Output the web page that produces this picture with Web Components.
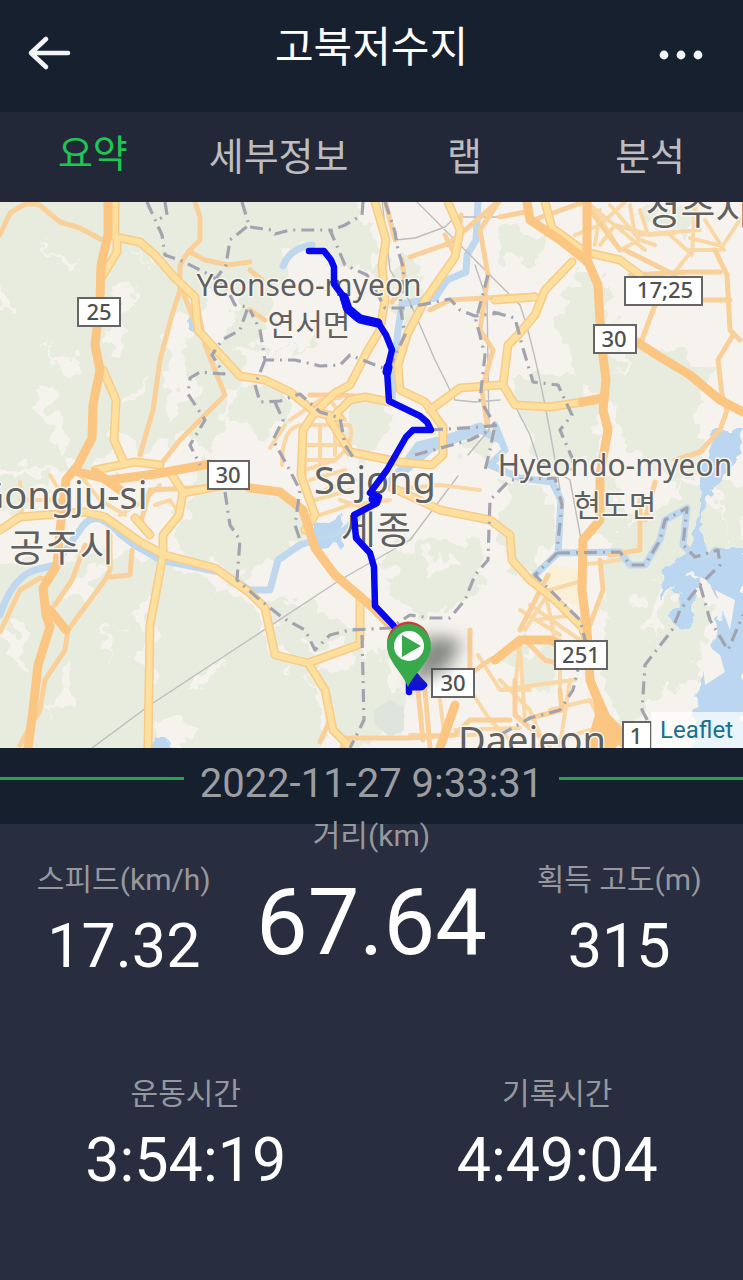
<!DOCTYPE html>
<html lang="ko">
<head>
<meta charset="utf-8">
<meta name="viewport" content="width=device-width, initial-scale=1">
<title>고북저수지</title>
<style>
  html { background: #282e3f; }
  body { margin: 0; font-family: Roboto, "Noto Sans CJK KR", sans-serif; color: #fff; }
</style>
</head>
<body>
<ride-page></ride-page>

<template id="page-tpl">
  <style>
    :host { display: flex; flex-direction: column; min-height: 100vh; background: #282e3f; }
    .row { display: grid; grid-auto-flow: column; grid-auto-columns: 1fr; }
    .main { align-items: start; }
    .main stat-item:not([large]) { margin-top: 44px; }
    .times { margin-top: 100px; }
  </style>
  <page-header>고북저수지</page-header>
  <tab-bar>
    <tab-button selected>요약</tab-button>
    <tab-button>세부정보</tab-button>
    <tab-button>랩</tab-button>
    <tab-button>분석</tab-button>
  </tab-bar>
  <route-map></route-map>
  <date-divider>2022-11-27 9:33:31</date-divider>
  <main>
    <div class="row main">
      <stat-item><span slot="label">스피드(km/h)</span>17.32</stat-item>
      <stat-item large><span slot="label">거리(km)</span>67.64</stat-item>
      <stat-item><span slot="label">획득 고도(m)</span>315</stat-item>
    </div>
    <div class="row times">
      <stat-item><span slot="label">운동시간</span>3:54:19</stat-item>
      <stat-item><span slot="label">기록시간</span>4:49:04</stat-item>
    </div>
  </main>
</template>

<template id="header-tpl">
  <style>
    :host { display: block; background: #17202f; }
    header { display: grid; grid-template-columns: 100px 1fr 100px; height: 112px; box-sizing: border-box; padding-bottom: 8px; align-items: center; }
    h1 { margin: 0 0 8px; font-size: 42px; line-height: 56px; font-weight: 400; text-align: center; }
    button { border: 0; padding: 0; background: none; color: #f4f5f7; display: grid; place-items: center; height: 88px; }
    svg { display: block; }
  </style>
  <header>
    <button type="button" aria-label="뒤로"><svg width="48" height="40" viewBox="0 0 48 40" fill="none" stroke="currentColor" stroke-width="4.6" stroke-linecap="round" stroke-linejoin="round"><path d="M20 7 5 21 20 35M5 21H42"/></svg></button>
    <h1><slot></slot></h1>
    <button type="button" aria-label="더보기"><svg width="72" height="16" viewBox="0 0 72 16" fill="currentColor"><circle cx="7" cy="11" r="4.4"/><circle cx="24" cy="11" r="4.4"/><circle cx="41" cy="11" r="4.4"/></svg></button>
  </header>
</template>

<template id="tabs-tpl">
  <style>
    :host { display: block; background: #222837; }
    nav { display: grid; grid-auto-flow: column; grid-auto-columns: 1fr; height: 90px; }
  </style>
  <nav><slot></slot></nav>
</template>

<template id="tab-tpl">
  <style>
    :host { display: grid; color: #bdbdbf; }
    :host([selected]) { color: #1fc653; }
    button { border: 0; padding: 0; background: none; color: inherit; font: inherit; font-size: 38px; line-height: 52px; }
    :host([selected]) button { padding-bottom: 6px; }
  </style>
  <button type="button"><slot></slot></button>
</template>

<template id="date-tpl">
  <style>
    :host { display: flex; gap: 16px; height: 76px; background: #161f2e; color: #9c9da1; }
    i { flex: 1; height: 3px; margin-top: 29px; background: #2aa052; }
    time { font-size: 40px; line-height: 48px; margin-top: 12px; }
  </style>
  <i></i><time datetime="2022-11-27T09:33:31"><slot></slot></time><i></i>
</template>

<template id="stat-tpl">
  <style>
    :host { display: flex; flex-direction: column; align-items: center; text-align: center; }
    .label { font-size: 30px; line-height: 24px; color: #97989d; white-space: nowrap; }
    .value { font-size: 61px; line-height: 72px; margin-top: 18px; }
    :host([large]) .value { font-size: 92px; line-height: 110px; margin-top: 20px; }
  </style>
  <div class="label"><slot name="label"></slot></div>
  <div class="value"><slot></slot></div>
</template>

<template id="map-tpl">
  <style>
    :host { display: block; position: relative; overflow: hidden; background: #f6f3ee; }
    svg { display: block; width: 100%; height: auto; }
    a { position: absolute; right: 0; bottom: 0; padding: 2px 10px 2px 9px; font-size: 24px; line-height: 32px; color: #16718f; text-decoration: none; background: #ffffffb8; }
    .line { fill: none; stroke-linecap: round; stroke-linejoin: round; }
    .forest { fill: #e8ecdf; }
    .clear { fill: #f6f3ee; }
    .water { fill: #bad6f1; }
    .river { stroke: #bfd8ee; stroke-width: 7; }
    .case { stroke: #f8cb88; }
    .second { stroke: #fddf9e; }
    .trunk { stroke: #fbc582; stroke-width: 9; }
    .minor { stroke: #f9d09a; stroke-width: 5; }
    .street { stroke: #fad8a5; stroke-width: 4; }
    .rail { stroke: #bdbdbd; stroke-width: 1.4; }
    .border { stroke: #a3a3af; stroke-width: 3.2; stroke-dasharray: 13 6 2 6; stroke-linecap: butt; }
    .name text { font-family: "Noto Sans", "Noto Sans CJK KR", sans-serif; fill: #60605f; stroke: #f7f5ef; stroke-width: 3; paint-order: stroke; stroke-linejoin: round; text-anchor: middle; }
    .name .s { font-size: 30px; } .name .l { font-size: 38px; }
    .shield rect { fill: #fff; stroke: #666; stroke-width: 2; }
    .shield text { font: 500 22px "Noto Sans", sans-serif; fill: #505050; text-anchor: middle; }
  </style>
  <svg viewBox="0 202 743 546" role="img" aria-label="주행 경로 지도">
    <defs>
      <filter id="rough" x="-5%" y="-5%" width="110%" height="110%"><feTurbulence type="fractalNoise" baseFrequency=".045" numOctaves="3" seed="4"/><feDisplacementMap in="SourceGraphic" scale="44" xChannelSelector="R" yChannelSelector="G"/></filter>
      <filter id="ragged" x="-5%" y="-5%" width="110%" height="110%"><feTurbulence type="fractalNoise" baseFrequency=".08" numOctaves="2" seed="2"/><feDisplacementMap in="SourceGraphic" scale="16" xChannelSelector="R" yChannelSelector="G"/></filter>
      <filter id="shade" x="-50%" y="-50%" width="200%" height="200%"><feGaussianBlur stdDeviation="8"/></filter>
    </defs>
    <rect y="202" width="743" height="546" fill="#f6f3ee"/>
    <g filter="url(#rough)">
      <g class="forest">
        <path d="M-20 180H235L245 240 240 290 245 350 215 450 160 440 145 455H122L90 470 0 465-20 480Z"/>
        <path d="M235 190H350L375 240 380 275 335 262 290 250 265 330 240 350 225 290Z"/>
        <path d="M240 320 275 355 320 335 325 345 265 352 238 345ZM235 390 285 385 290 425 255 435 232 420Z"/>
        <path d="M-20 475 40 475 45 500 10 520-20 500ZM205 460 255 485 290 500 305 540 240 580 180 550 170 520Z"/>
        <path d="M-20 560 60 560 120 550 160 560 240 590 270 640 260 700 265 770H-20Z"/>
        <path d="M270 600 320 600 360 640 385 650 400 690 375 740 345 750 325 690 280 655Z"/>
        <path d="M260 660 310 670 325 730 315 760 250 760ZM395 545 480 540 485 590 455 605 420 618 385 590Z"/>
        <path d="M340 405 385 405 395 430 365 455 345 440ZM400 250 425 275 415 310 395 330Z"/>
        <path d="M500 225 550 235 540 270 505 260ZM580 265 610 290 620 390 590 395 565 370 560 330Z"/>
        <path d="M625 350 665 345 710 370 700 420 705 470 675 490 635 450 610 420ZM660 200 700 210 690 235 645 225Z"/>
        <path d="M510 380 560 370 590 390 600 450 560 480 520 430ZM505 480 555 490 555 545 520 580 500 540Z"/>
        <path d="M615 540 670 500 690 480 710 490 720 550 680 580 660 700 620 735 600 665 605 600Z"/>
        <path d="M665 590 710 610 700 680 650 690ZM715 480 750 480 750 560 720 550ZM505 650 560 645 560 680 525 690Z"/>
        <path d="M370 700 405 700 408 735 375 735ZM590 485 625 490 625 545 600 545ZM460 430 500 430 500 450 465 455Z"/>
      </g>
      <g class="clear">
        <path d="M40 240 70 260 60 266ZM110 290 140 287 122 308 127 345 110 355ZM130 240 175 280 150 260ZM50 350 85 372 70 382ZM165 320 192 312 192 400 168 412ZM30 385 50 395 70 450 60 462 48 425Z"/>
        <path d="M105 405 145 455 120 455ZM125 390 145 375 135 405ZM85 565 103 565 88 605 68 600ZM10 620 30 625 28 680 10 650ZM70 650 82 690 48 715ZM138 605 154 595 152 680 142 680ZM195 680 225 655 212 690 185 685ZM160 718 190 727 185 755 155 755ZM0 285 18 305 0 308ZM98 640 118 624 108 665Z"/>
        <path d="M205 285 235 310 220 360 205 335ZM170 480 200 490 180 520ZM305 645 345 640 350 670 320 680ZM640 600 668 570 650 640ZM420 550 460 565 430 575Z"/>
      </g>
    </g>
    <g class="water" filter="url(#ragged)">
      <path d="M715 430 743 430 740 455 715 485 700 520 708 550 745 545V760H690L700 690 715 640 725 600 700 580 690 570 660 600 665 570 690 550 700 510 700 470Z"/>
      <path d="M665 570 700 580 690 630 665 620 680 595ZM697 700 745 680 745 760 690 760ZM150 752 156 738 166 736 174 752ZM190 308 198 322 194 336 188 320ZM315 525 345 515 340 545 310 550Z"/>
    </g>
    <path d="M700 640 720 655 725 672 705 685ZM715 590 735 600 730 630Z" class="clear"/>
    <g class="line river">
      <path d="M312 245Q290 248 283 266M478 202 476 240 467 255 466 272 447 280 435 298 402 304 398 330 394 370 392 400"/>
      <path d="M0 615Q12 578 35 570L55 565 80 530Q92 510 110 525L135 545 160 560 220 572 250 590 270 590 278 560 300 545 345 530 370 505 400 470 418 445 480 430 500 440"/>
      <path d="M495 425 505 450 490 465 520 478 552 482 561 500 558 553 535 575M558 553 620 552 630 565 645 565 660 540 665 520 687 508 683 545 695 557 718 555"/>
    </g>
    <path d="M403 470 430 447 480 428" class="line" stroke="#bfd8ee" stroke-width="11"/>
    <path d="M120 532 137 545 160 556" class="line" stroke="#bad6f1" stroke-width="10"/>
    <path d="M374 710 390 700 404 708 404 730 390 737 374 724Z" fill="#dfe4dd"/>
    <path d="M550 565 582 570 582 610 548 590Z" fill="#faf0d5"/>
    <g class="line rail">
      <path d="M92 748 150 705 340 580 410 540 458 476M417 202 480 265 520 305Q538 355 560 490M385 205 395 240 415 238 445 227 455 217 500 217M382 200 390 270 410 302 435 360 455 400 475 402 500 400M475 265 487 300 489 430 468 455M512 400 530 435 538 460 570 480 583 550"/>
    </g>
    <g class="line street">
      <path d="M595 210 620 250 640 240 655 245M690 250 720 250 743 215M600 245 615 225 650 235M610 205 640 240M575 235 600 225 625 202M590 205 645 250M630 205 635 235 700 230M670 235 690 253 675 272M695 205 692 255M705 220 724 250M600 210 595 245M640 210 648 235 675 233M690 238 722 246"/>
      <path d="M282 465Q282 425 303 425H350Q355 445 335 460L305 470M305 425V475M320 425V470M335 420V455M305 445H345M308 460H335M310 480 345 470M315 500 350 490M320 515 350 505 390 500M325 490 355 480"/>
      <path d="M290 420 320 400 340 398M330 400 345 420M390 490 440 485 480 490M340 500 370 510M270 448 285 425"/>
      <path d="M525 630 550 590 585 580M535 620 575 615M520 610 560 635M545 590 555 640M530 605 580 640M520 640 515 690M580 565 620 560"/>
      <path d="M500 690 550 683 575 680M520 650 525 720M560 640 560 690M500 680 530 710 540 735M478 655 500 690 530 690M470 690 490 720 510 740M550 710 590 700 600 720M440 700 445 740M570 680 560 745M410 735 475 735M455 730 520 728M540 745 590 730"/>
      <path d="M50 475 65 500M20 482 22 512M20 500H70M80 475 100 500 125 515M120 515 145 500 160 485M155 505 170 500 180 515"/>
    </g>
    <g class="line minor">
      <path d="M0 235 10 213 25 204 38 204 60 222 80 228 102 240M195 202 200 217 200 240 188 252 180 265 180 290 172 315 160 360 153 410 140 455M190 252 205 260 228 265 250 262M198 310 205 345 215 370 225 395 205 415 180 440 162 463M180 285 200 335"/>
      <path d="M0 632 20 590 40 578 50 580M85 545 72 580 55 605M110 535 110 570 105 580 68 630M110 577 130 575 132 550M68 630 65 650 45 680 40 710 20 745"/>
      <path d="M410 257 450 243 500 200M445 235 455 255 461 215M500 200 480 230 488 275 480 330 493 350 482 390 487 425M430 310 450 300 535 295M402 260 405 285 392 302M385 200 395 240M250 270 262 280M265 320 250 310"/>
      <path d="M500 217 525 212M533 220 590 200M620 250 590 210M630 275 690 272 720 272M700 300H730M640 345 655 305M625 250 675 275M715 250 727 275 730 330 740 340M733 335 718 360 722 395 727 410 720 430 700 452 675 460"/>
      <path d="M310 395 340 395 380 398M548 575 520 630M470 630V680M468 675 490 660 520 645M425 690 430 748M525 640 545 660 560 664M600 560 603 590 590 625M640 500 640 550 610 555M655 482 645 520M515 680 515 715 550 745M210 487 150 490 140 525M418 690 423 740"/>
      <path d="M342 748 345 738 410 738 455 735 470 720 510 720M330 720 320 742M560 690 562 710 530 718"/>
    </g>
    <g class="line case" stroke-width="9">
      <path d="M115 202 115 237 140 242 155 255 175 278 195 297 198 330 218 352 240 376 265 380 290 392 315 412 340 418"/>
      <path d="M117 242 117 252 103 275M103 370 116 400 114 440 124 463M95 470 135 462 160 465M375 202 386 240 382 265 385 300 380 330 368 350 350 385 335 393 315 412 303 430 301 475 315 515 305 530"/>
      <path d="M0 530 20 517 85 512 105 517 140 542 165 555 215 568 250 593 265 608 275 655 308 663 325 690 333 730 348 745"/>
      <path d="M170 472 183 492 179 515 163 535 163 555 150 625 148 748M183 493 225 485M150 535 135 518"/>
      <path d="M448 202 460 230 455 257 425 300 407 335 398 365 400 390 425 402 443 427 443 455 432 465 400 462 350 452 330 420 350 400 365 397 390 402M430 410 460 388 500 385"/>
      <path d="M393 488 440 510 490 520 510 535 512 560 530 580 555 600 582 627 590 650M308 663 358 645M360 598V640M545 202 552 228 585 252 620 260 640 275M572 262 545 290 535 315 518 335 508 345 503 385 515 405 550 407 595 400M495 300 535 297"/>
    </g>
    <g class="line second" stroke-width="6">
      <path d="M115 202 115 237 140 242 155 255 175 278 195 297 198 330 218 352 240 376 265 380 290 392 315 412 340 418"/>
      <path d="M117 242 117 252 103 275M103 370 116 400 114 440 124 463M95 470 135 462 160 465M375 202 386 240 382 265 385 300 380 330 368 350 350 385 335 393 315 412 303 430 301 475 315 515 305 530"/>
      <path d="M0 530 20 517 85 512 105 517 140 542 165 555 215 568 250 593 265 608 275 655 308 663 325 690 333 730 348 745"/>
      <path d="M170 472 183 492 179 515 163 535 163 555 150 625 148 748M183 493 225 485M150 535 135 518"/>
      <path d="M448 202 460 230 455 257 425 300 407 335 398 365 400 390 425 402 443 427 443 455 432 465 400 462 350 452 330 420 350 400 365 397 390 402M430 410 460 388 500 385"/>
      <path d="M393 488 440 510 490 520 510 535 512 560 530 580 555 600 582 627 590 650M308 663 358 645M360 598V640M545 202 552 228 585 252 620 260 640 275M572 262 545 290 535 315 518 335 508 345 503 385 515 405 550 407 595 400M495 300 535 297"/>
    </g>
    <g class="line trunk">
      <path d="M108 202 108 235 101 265 100 300 95 345 100 370 93 405 92 438 78 465 66 480 60 530 57 565 43 588 46 615 50 627 38 665 33 710 28 748M78 472 110 480 155 474 210 464 250 488 280 492 303 510 315 548 335 575 370 605 395 630 402 665M50 610 66 630M95 472 120 490"/>
      <path d="M527 202 530 220 560 240 588 262 598 285 601 340 606 380 603 410 608 430 600 475 600 520 583 540 582 590 587 630 590 680 605 720 625 745M587 202 587 262M637 342 660 357 690 375 720 400 743 412M582 402 603 398M495 660 520 640 550 640 575 650M440 748 455 705"/>
    </g>
    <path d="M590 670 610 715 630 735 615 748H585L595 715Z" fill="#fbc582"/>
    <g class="line border">
      <path d="M147 202 162 235 165 255 182 261 210 275 225 285 235 305 248 307 240 330 222 340 212 355 224 374 200 372 190 378 188 394 205 420 190 445 200 465"/>
      <path d="M165 202 167 215 157 220M242 202 249 225 230 240 226 265 215 280M250 227 272 230 275 234 290 230 330 230 345 265 367 275 378 295 385 308 405 308 450 299 460 310 475 316 500 313"/>
      <path d="M363 202 362 215 345 225 328 232M385 202 395 232 398 250 404 270 400 305 405 335 388 370 350 355 340 365 320 366 295 360 265 360 260 330 250 310M265 360 255 385 260 402 280 401 300 394 320 412 340 418 345 445 355 460"/>
      <path d="M275 402 283 420 273 440 287 465 300 490 295 525 300 540M430 430 480 427 500 425M488 275 476 320 485 355 480 400 495 425 490 450 485 470"/>
      <path d="M225 492 230 525 240 540 237 580 260 600 283 618 305 630 315 650 330 635 350 630 390 628 410 615 430 618 450 618 465 600 475 575 488 560 490 500 510 480 555 478 562 505 557 550M557 553 535 575 580 620 585 640 573 690 560 710 530 718 500 735"/>
      <path d="M493 312 515 318 522 345 533 382 558 385 572 415 560 430 573 460 570 475M557 553 620 552 630 565 645 565 660 540 665 520 687 508 683 545 695 557 718 550 720 565 700 585 680 610 672 630 645 665 642 710 650 725M700 585 710 620 728 650 743 615M362 635 364 720 350 748M415 455 470 440 490 430"/>
    </g>
    <g class="name">
      <text class="s" x="309" y="296">Yeonseo-myeon</text><text class="s" x="309" y="335">연서면</text>
      <text class="l" x="375" y="494">Sejong</text><text class="l" x="376" y="543">세종</text>
      <text class="l" x="62" y="509">Gongju-si</text><text class="l" x="62" y="561">공주시</text>
      <text class="s" x="615" y="476">Hyeondo-myeon</text><text class="s" x="615" y="516">현도면</text>
      <text class="l" x="532" y="754">Daejeon</text><text class="l" x="698" y="224">청주시</text>
    </g>
    <g class="shield">
      <rect x="78" y="298" width="42" height="28"/><text x="99" y="320">25</text>
      <rect x="208" y="461" width="41" height="28"/><text x="228" y="483">30</text>
      <rect x="625" y="277" width="77" height="28"/><text x="665" y="298">17;25</text>
      <rect x="594" y="325" width="42" height="28"/><text x="614" y="347">30</text>
      <rect x="555" y="641" width="52" height="28"/><text x="581" y="663">251</text>
      <rect x="432" y="669" width="42" height="28"/><text x="453" y="691">30</text>
      <rect x="623" y="722" width="28" height="30"/><text x="636" y="744">1</text>
    </g>
    <g class="line" stroke="#0909ee">
      <path stroke-width="6.5" d="M309 251H324L331 260 334 267 334 284 343 296 346 308 357 318 379 324 386 335 392 350 387 370 389 401 420 416 427 422 431 430H413L406 437 387 470 370 493 379 497 377 503 354 515 356 538 370 553 374 567 375 606 393 625 408 645M409 692V670L424 685"/>
      <path stroke-width="9" d="M344 297 348 309 360 319 378 323M388 367 387 372M373 499H375M415 677 421 686 413 686"/>
    </g>
    <path d="M409 687 426 636 462 640 448 668Z" fill="#3a453d" opacity=".6" filter="url(#shade)"/>
    <path d="M408 685C403 669 387 660 387 643A21 21 0 0 1 430 643C430 660 415 668 408 685Z" fill="#cf3a36"/>
    <path d="M408 687C403 673 387 661 387 646A22 22 0 0 1 431 646C431 662 414 673 408 687Z" fill="#38aa4b"/>
    <circle cx="409" cy="646" r="15" fill="#fff"/><path d="M402 635V657L421 646Z" fill="#38aa4b"/>
  </svg>
  <a href="https://leafletjs.com">Leaflet</a>
</template>

<script>
  const define = (name, templateId) => customElements.define(name, class extends HTMLElement {
    constructor() {
      super();
      this.attachShadow({ mode: "open" }).append(document.getElementById(templateId).content.cloneNode(true));
    }
  });
  define("page-header", "header-tpl");
  define("tab-bar", "tabs-tpl");
  define("tab-button", "tab-tpl");
  define("route-map", "map-tpl");
  define("date-divider", "date-tpl");
  define("stat-item", "stat-tpl");
  define("ride-page", "page-tpl");
</script>
</body>
</html>
